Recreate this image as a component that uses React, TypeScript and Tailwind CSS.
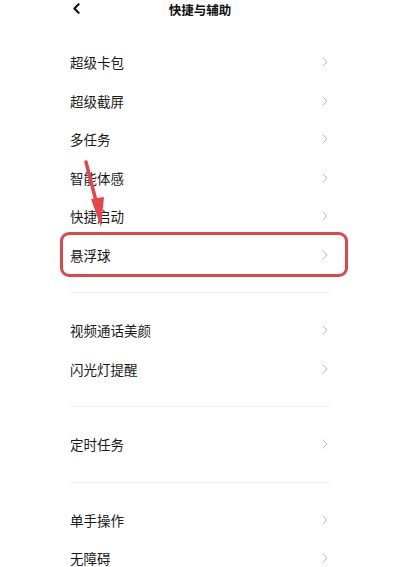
import { ChevronLeft, ChevronRight } from "lucide-react";

const groups: string[][] = [
  ["超级卡包", "超级截屏", "多任务", "智能体感", "快捷启动", "悬浮球"],
  ["视频通话美颜", "闪光灯提醒"],
  ["定时任务"],
  ["单手操作", "无障碍"],
];

function Row({ label, marked }: { label: string; marked?: boolean }) {
  return (
    <div className="relative flex items-center justify-between h-[38.5px]">
      <span className="text-[13.5px] text-[#1a1a1a]">{label}</span>
      <ChevronRight size={16} strokeWidth={1.5} className="text-[#bbbbbb] -mr-[3px]" />
      {marked && (
        // annotation box around the highlighted row
        <div className="absolute -top-[4px] -bottom-[3px] -left-[10px] -right-[18px] border-[3px] border-[#df464c] rounded-[9px]" />
      )}
    </div>
  );
}

export default function App() {
  return (
    <div
      className="relative w-[400px] h-[567px] overflow-hidden bg-white"
      style={{ fontFamily: '"Noto Sans CJK SC", "Noto Sans", sans-serif' }}
    >
      <div className="relative flex items-center justify-center h-[18px] pt-[1px]">
        <ChevronLeft size={17} strokeWidth={3} className="absolute left-[68px] top-0 text-[#111]" />
        <span className="text-[12.5px] font-bold text-[#111] leading-[16px]">快捷与辅助</span>
      </div>

      <div className="px-[70px] pt-[25px]">
        {groups.map((g, gi) => (
          <div key={gi}>
            {gi > 0 && <div className="h-px bg-[#efefef] my-[18px]" />}
            {g.map((label) => (
              <Row key={label} label={label} marked={label === "悬浮球"} />
            ))}
          </div>
        ))}
      </div>

      {/* red pointer arrow */}
      <svg className="absolute left-0 top-0" width="400" height="567" viewBox="0 0 400 567">
        <line x1="86" y1="162" x2="97" y2="205" stroke="#e5464b" strokeWidth="3.5" strokeLinecap="round" />
        <polygon points="101,227 91,199 104,197" fill="#e5464b" />
      </svg>
    </div>
  );
}
